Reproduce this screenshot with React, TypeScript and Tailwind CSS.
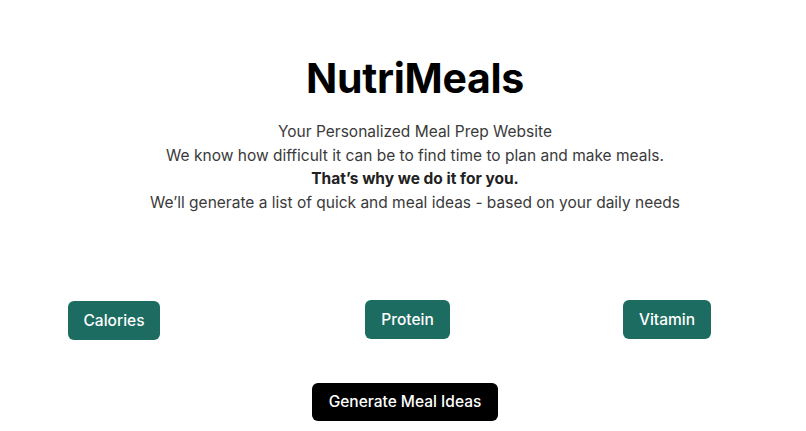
import React from 'react';

export default function App() {
  return (
    <div className="min-h-screen w-full bg-white font-['Inter',sans-serif] text-[#333]">
      <header className="pt-[50px] pl-[24px] flex flex-col items-center text-center">
        <h1 className="text-[41px] leading-[56px] font-bold text-black tracking-[-0.3px]">NutriMeals</h1>
        <div className="mt-[14px] text-[15.5px] leading-[23.5px] text-[#3a3a3a]">
          <p>Your Personalized Meal Prep Website</p>
          <p>We know how difficult it can be to find time to plan and make meals.</p>
          <p className="font-bold text-[#222]">That’s why we do it for you.</p>
          <p>We’ll generate a list of quick and meal ideas - based on your daily needs</p>
        </div>
      </header>

      <div className="mt-[86px] flex items-start pl-[68px]">
        <button className="mt-[1px] h-[39px] w-[92px] rounded-md bg-[#1d6c61] text-[15.5px] font-medium text-white">
          Calories
        </button>
        <button className="ml-[205px] h-[39px] w-[85px] rounded-md bg-[#1d6c61] text-[15.5px] font-medium text-white">
          Protein
        </button>
        <button className="ml-[173px] h-[39px] w-[88px] rounded-md bg-[#1d6c61] text-[15.5px] font-medium text-white">
          Vitamin
        </button>
      </div>

      <div className="mt-[43px] flex pl-[312px]">
        <button className="h-[38px] w-[186px] rounded-md bg-black text-[15.5px] font-medium text-white">
          Generate Meal Ideas
        </button>
      </div>
    </div>
  );
}
